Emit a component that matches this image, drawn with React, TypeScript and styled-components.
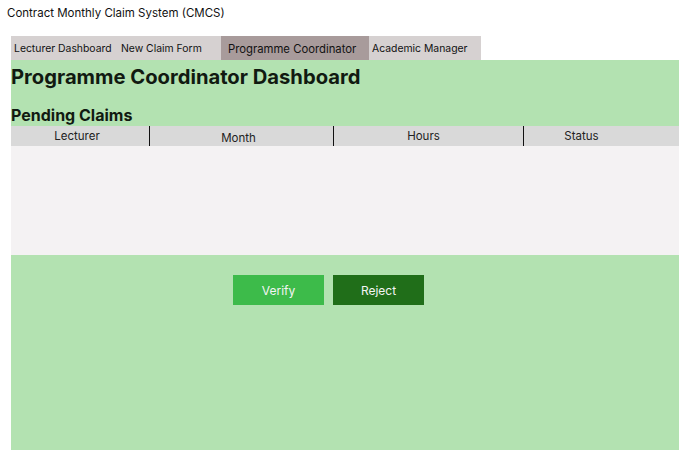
import React from "react";
import styled, { createGlobalStyle } from "styled-components";

const Global = createGlobalStyle`
  body { margin: 0; background: #fff; font-family: Inter, "Noto Sans", sans-serif; }
`;

const Page = styled.div`
  width: 692px;
  height: 465px;
  box-sizing: border-box;
  padding: 5px 13px 0 11px;
`;

const SiteTitle = styled.div`
  font-family: Inter, sans-serif;
  font-size: 11.5px;
  color: #111;
  margin-left: -4px;
  height: 31px;
  line-height: 16px;
`;

const Tabs = styled.nav`
  display: flex;
  height: 24px;
`;

const Tab = styled.div<{ $active?: boolean; $w: number; $pad?: number }>`
  width: ${(p) => p.$w}px;
  background: ${(p) => (p.$active ? "#a89b9b" : "#d6d1d1")};
  font-family: Inter, sans-serif;
  font-size: ${(p) => (p.$active ? "11.3px" : "10.4px")};
  color: #111;
  display: flex;
  align-items: center;
  padding-left: ${(p) => p.$pad ?? 3}px;
  box-sizing: border-box;
  padding-top: 1px;
`;

const Panel = styled.main`
  background: #b3e2b1;
  height: 390px;
  display: flex;
  flex-direction: column;
`;

const Heading = styled.h1`
  margin: 0;
  font-family: Inter, sans-serif;
  font-weight: 700;
  font-size: 20.2px;
  color: #111a11;
  height: 36px;
  line-height: 34px;
`;

const SubHeading = styled.h2`
  margin: 0;
  font-family: Inter, sans-serif;
  font-weight: 700;
  font-size: 16px;
  color: #111a11;
  height: 30px;
  line-height: 38px;
`;

const HeaderRow = styled.div`
  display: grid;
  grid-template-columns: 138px 184px 190px 1fr;
  background: #d9d9d9;
  height: 20px;
`;

const HeadCell = styled.div<{ $first?: boolean; $drop?: number; $right?: number }>`
  border-left: ${(p) => (p.$first ? "none" : "1px solid #111")};
  font-family: Inter, sans-serif;
  font-size: 11.5px;
  color: #222;
  text-align: center;
  line-height: 20px;
  padding-top: ${(p) => p.$drop ?? 0}px;
  padding-right: ${(p) => p.$right ?? 6}px;
  box-sizing: border-box;
`;

const Body = styled.div`
  background: #f4f2f3;
  height: 109px;
`;

const Actions = styled.div`
  display: flex;
  gap: 9px;
  padding: 20px 0 0 222px;
`;

const Button = styled.button<{ $dark?: boolean }>`
  width: 91px;
  height: 30px;
  border: none;
  background: ${(p) => (p.$dark ? "#206e19" : "#3dbb4a")};
  color: #f4f4f4;
  font-family: Inter, sans-serif;
  font-size: 12px;
  padding: 0;
`;

export default function App() {
  return (
    <>
      <Global />
      <Page>
        <SiteTitle>Contract Monthly Claim System (CMCS)</SiteTitle>
        <Tabs>
          <Tab $w={105}>Lecturer Dashboard</Tab>
          <Tab $w={105} $pad={5}>New Claim Form</Tab>
          <Tab $w={148} $active $pad={7}>Programme Coordinator</Tab>
          <Tab $w={112}>Academic Manager</Tab>
        </Tabs>
        <Panel>
          <Heading>Programme Coordinator Dashboard</Heading>
          <SubHeading>Pending Claims</SubHeading>
          <HeaderRow>
            <HeadCell $first>Lecturer</HeadCell>
            <HeadCell $drop={2}>Month</HeadCell>
            <HeadCell $right={10}>Hours</HeadCell>
            <HeadCell $right={40}>Status</HeadCell>
          </HeaderRow>
          <Body />
          <Actions>
            <Button>Verify</Button>
            <Button $dark>Reject</Button>
          </Actions>
        </Panel>
      </Page>
    </>
  );
}
